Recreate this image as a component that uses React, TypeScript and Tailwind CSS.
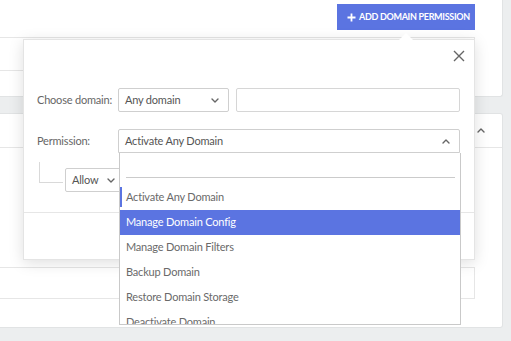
import React from 'react'

const font = { fontFamily: 'Lato, "Noto Sans", sans-serif' }

function ChevronDown({ className }: { className?: string }) {
  return (
    <svg className={className} width="8" height="5" viewBox="0 0 8 5" fill="none">
      <path d="M1 1l3 3 3-3" stroke="#666" strokeWidth="1.4" strokeLinecap="round" strokeLinejoin="round" />
    </svg>
  )
}

function ChevronUp({ className }: { className?: string }) {
  return (
    <svg className={className} width="8" height="5" viewBox="0 0 8 5" fill="none">
      <path d="M1 4l3-3 3 3" stroke="#666" strokeWidth="1.4" strokeLinecap="round" strokeLinejoin="round" />
    </svg>
  )
}

const options = [
  'Activate Any Domain',
  'Manage Domain Config',
  'Manage Domain Filters',
  'Backup Domain',
  'Restore Domain Storage',
  'Deactivate Domain',
]

export default function App() {
  return (
    <div className="relative w-[511px] h-[341px] overflow-hidden bg-[#eceeef] whitespace-nowrap" style={font}>
      {/* Top card */}
      <div className="w-[503px] h-[97px] bg-white border-r border-b border-[#e1e3e4] rounded-br-[3px]">
        <div className="flex justify-end pt-[4px] pr-[27px]">
          <button className="flex items-center gap-[3px] h-[26px] w-[138px] pl-[10px] bg-[#5b74e1] text-white text-[9px] font-bold tracking-[-0.3px]">
            <svg width="9" height="9" viewBox="0 0 9 9">
              <path d="M4.5 0.5v8M0.5 4.5h8" stroke="white" strokeWidth="1.8" />
            </svg>
            ADD DOMAIN PERMISSION
          </button>
        </div>
        <div className="mt-[7px] w-[475px] h-[34px] border-t border-b border-r border-[#e6e6e6]"></div>
      </div>

      {/* Second card */}
      <div className="mt-[16px] w-[503px] h-[215px] bg-white border-t border-r border-b border-[#e1e3e4] rounded-r-[3px]">
        <div className="flex items-center justify-end h-[34px] border-b border-[#e6e6e6] pr-[17px]">
          <ChevronUp />
        </div>
        <div className="mt-[119px] w-[475px] h-[32px] border-t border-b border-r border-[#e6e6e6]"></div>
      </div>

      {/* Popover */}
      <div className="absolute left-[23px] top-[39px] w-[452px] h-[221px] bg-white border border-[#e4e4e4] shadow-[0_3px_14px_rgba(0,0,0,0.13)] text-[11px] tracking-[-0.2px]">
        <div className="absolute -top-[7px] left-[375px] w-0 h-0 border-l-[7px] border-r-[7px] border-b-[7px] border-l-transparent border-r-transparent border-b-white"></div>
        <div className="flex justify-end h-[48px] pt-[10px] pr-[9px]">
          <svg width="12" height="12" viewBox="0 0 12 12">
            <path d="M1 1l10 10M11 1L1 11" stroke="#666" strokeWidth="1.4" />
          </svg>
        </div>

        <div className="flex items-center h-[24px]">
          <div className="w-[94px] pl-[13px] text-[#666]">Choose domain:</div>
          <div className="flex items-center justify-between w-[111px] h-[24px] border border-[#cfcfcf] rounded-[2px] pl-[6px] pr-[9px] text-[#555]">
            Any domain
            <ChevronDown />
          </div>
          <div className="ml-[7px] w-[224px] h-[24px] border border-[#d6d6d6] rounded-[2px]"></div>
        </div>

        <div className="flex items-center h-[24px] mt-[17px]">
          <div className="w-[94px] pl-[13px] text-[#666]">Permission:</div>
          <div className="relative">
            <div className="flex items-center justify-between w-[342px] h-[24px] border border-[#cfcfcf] rounded-t-[2px] pl-[6px] pr-[9px] text-[#555]">
              Activate Any Domain
              <ChevronUp />
            </div>
            <div className="absolute z-10 top-[24px] left-[1px] w-[342px] h-[172px] overflow-hidden bg-white border-l border-r border-b border-[#c9c9c9]">
              <div className="h-[32px] pt-[7px] pl-[6px] pr-[5px]">
                <div className="h-[18px] border-b border-[#cbcbcb]"></div>
              </div>
              {options.map((o, i) => (
                <div
                  key={o}
                  className={
                    i === 1
                      ? 'relative flex items-center h-[25px] pl-[6px] bg-[#5b74e1] text-white'
                      : 'relative flex items-center h-[25px] pl-[6px] text-[#6a6a6a]'
                  }
                >
                  {i === 0 && <span className="absolute left-0 top-[2px] bottom-[3px] w-[2px] bg-[#5b74e1]"></span>}
                  {o}
                </div>
              ))}
            </div>
          </div>
        </div>

        <div className="flex items-center h-[24px] mt-[15px] pl-[15px]">
          <div className="self-start -mt-[6px] w-[24px] h-[21px] border-l border-b border-[#d9d9d9]"></div>
          <div className="ml-[2px] flex items-center w-[60px] h-[24px] border border-[#cfcfcf] rounded-[2px] pl-[6px] text-[#555]">
            Allow
            <ChevronDown className="ml-[9px]" />
          </div>
        </div>

        <div className="mt-[20px] border-t border-[#e6e6e6]"></div>
      </div>
    </div>
  )
}
